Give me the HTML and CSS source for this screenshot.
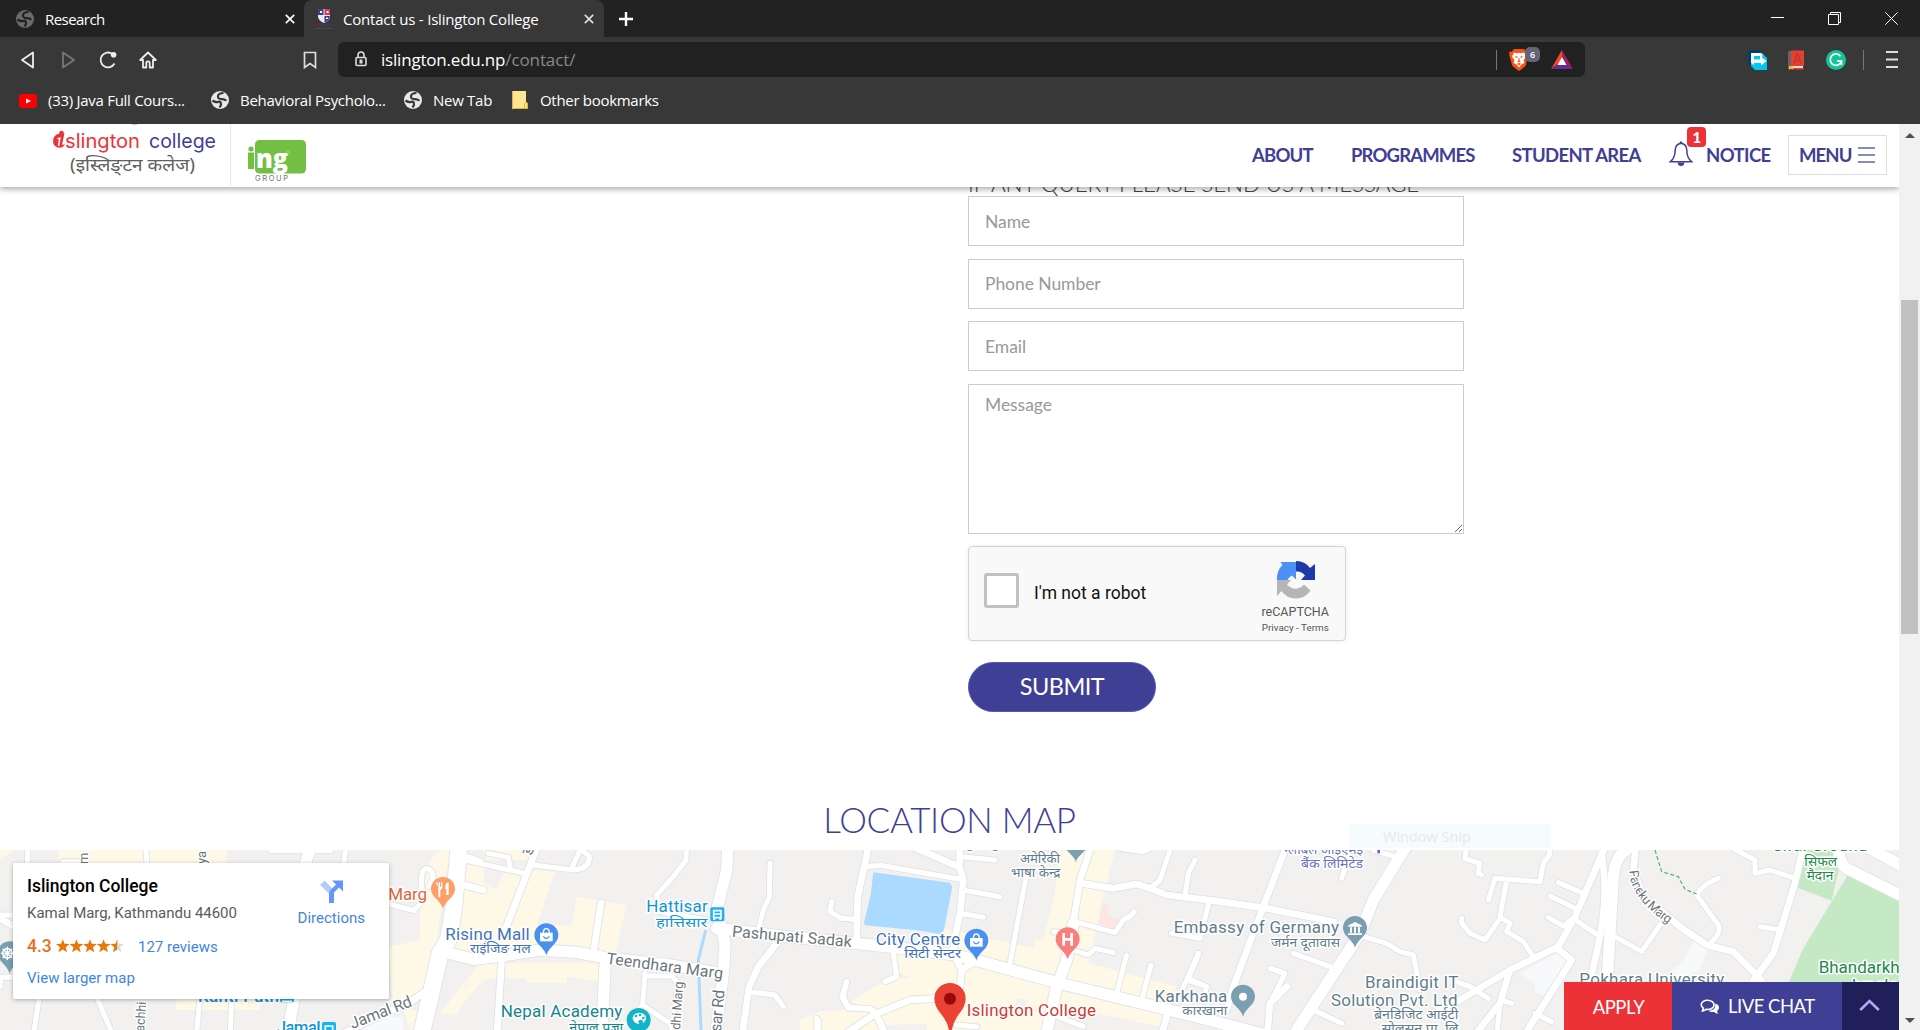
FILE: index.html
```html
<!DOCTYPE html>
<html lang="en">
<head>
<meta charset="utf-8">
<title>Contact us - Islington College</title>
<link rel="stylesheet" href="styles.css">
</head>
<body>
<div class="window">
  <div class="tabstrip">
    <div class="tab">
      <svg class="globe dim" viewBox="0 0 18 18"><circle cx="9" cy="9" r="9"/><path d="M1.500 9.500Q5 12 7.500 10.800T10 14L8.500 16.500M12.500 2Q7.500 2 7 5t3.500 3.200T15 10"/></svg>
      <span class="tab-title research">Research</span>
      <svg class="close" viewBox="0 0 10 10"><path d="M.8.8l8.400 8.400M9.200.8L.8 9.200"/></svg>
    </div>
    <div class="tab active">
      <svg class="crest" viewBox="0 0 20 20"><path fill="#e8e8ee" d="M4 0h12v8q-1 4-6 6-5-2-6-6z"/><path fill="#3c3f8f" d="M4 0h5.500v6H4zM10.500 7H16q-1 5-5.500 6.500z"/><path fill="#d8384a" d="M10.500 0H16v6h-5.500z"/><path fill="#fff" d="M6 2h2v2H6zM12.500 2h2v2h-2zM12 8.500h2v1.500h-2z"/><path stroke="#8b1f27" stroke-dasharray="1.500 .4" d="M0 16h9"/><path stroke="#3c3f8f" stroke-dasharray="1.500 .4" d="M10 16h10"/><path stroke="#575757" stroke-dasharray="1 .5" d="M2 19.300h16"/></svg>
      <span class="tab-title contact">Contact us - Islington College</span>
      <svg class="close" viewBox="0 0 10 10"><path d="M.8.8l8.400 8.400M9.200.8L.8 9.200"/></svg>
    </div>
    <svg class="newtab" viewBox="0 0 14 14"><path d="M7 0v14M0 7h14"/></svg>
    <div class="controls">
      <svg width="13" height="13" viewBox="0 0 13 13"><path d="M0 5.500h13"/></svg>
      <svg width="13" height="13" viewBox="0 0 13 13"><path d="M.5 2.500h10v10H.5zM2.500 2.500v-2h10v10h-2"/></svg>
      <svg width="13" height="13" viewBox="0 0 13 13"><path d="M.3.3l12.400 12.400M12.700.3L.3 12.700"/></svg>
    </div>
  </div>

  <div class="toolbar">
    <div class="navicons">
      <svg viewBox="0 0 18 18"><path d="M14 1.500v15L3 9z"/></svg>
      <svg class="off" viewBox="0 0 18 18"><path d="M4 1.500v15L15 9z"/></svg>
      <svg viewBox="0 0 18 18"><path d="M15.500 12.500A7.400 7.400 0 1 1 13.500 3"/><circle class="solid" cx="14.600" cy="3.800" r="2.800"/></svg>
      <svg viewBox="0 0 18 18"><path d="M1.200 9L9 1.500 16.800 9H14v7.500h-3.300V12q0-1.700-1.700-1.700T7.300 12v4.500H4V9z"/></svg>
    </div>
    <svg class="ribbon" viewBox="0 0 14 18"><path d="M1.500 1.500h11v15L7 12.500l-5.500 4z"/></svg>
    <div class="urlbar">
      <svg class="lock" viewBox="0 0 12 16"><rect x="1" y="6.500" width="10" height="8" rx="1"/><path d="M3 6.500V4q0-3 3-3t3 3v2.500"/><path d="M5.300 9.300h1.400v2.400H5.300z"/></svg>
      <span class="url">islington.edu.np<i>/contact/</i></span>
      <span class="url-sep"></span>
      <span class="brave">
        <svg viewBox="0 0 20 22"><path fill="#fb5012" d="M5 0h10l2.500 2.500 2 .5-1 4L17 16q-1 2-7 6-6-4-7-6L.5 7l-.5-4 3-.5z"/><path fill="#fff" d="M5 3.500l3 .8 2-.5 2 .5 3-.8 2 4-2.500 4 1 2.500-2.500 1-3 3.500-3-3.500-2.500-1 1-2.500-2.500-4z"/><path fill="#fb5012" d="M5.500 6.800l3.300 1-.8 1.500zM14.500 6.800l-3.300 1 .8 1.500zM9.600 8.500h.8l.2 3 1.200 1-1.800.8-1.800-.8 1.200-1zM7.800 14.800l2.200-.8 2.200.8-2.200 1.400z"/></svg>
        <b>6</b>
      </span>
      <svg class="bat" viewBox="0 0 22 19"><path fill="#ff4724" d="M11 0v7L7.500 13.500 0 19z"/><path fill="#9e1f63" d="M11 0l11 19-7.500-5.500L11 7z"/><path fill="#662d91" d="M0 19l7-5.500h8L22 19z"/><path fill="#fff" d="M11 7l4.500 8h-9z"/></svg>
    </div>
    <div class="extensions">
      <svg viewBox="0 0 20 20"><path fill="#043d6b" d="M0 0h11l4 4v13H4L0 13z"/><path fill="#00c8ee" d="M7 3h7l5 5v12H7l-4-4v-4z"/><path fill="#fff" d="M3 3h10l1.500 2-.5 2.500L18.500 11 13 15.500V13H6v2L3 13z"/><path fill="#00c8ee" d="M6 6h6v3.500H6z"/></svg>
      <svg viewBox="0 0 20 20"><path fill="#e63e33" d="M4 .5h13V16H4z"/><path fill="#656565" d="M1 1.500L4 .5V19H1z"/><path fill="#ddd" d="M4 16h12v2.500H4z"/><path fill="#b5261e" d="M4 18.500h13V20H4z"/><path fill="#f4c430" d="M2 16h4v3.500l-2-1-2 1.500z"/><path stroke="#c0352c" fill="none" stroke-width="1.400" d="M7 13.500l3-9.500h1l3 9.500M8 10.500h5"/></svg>
      <svg viewBox="0 0 20 20"><circle cx="10" cy="10" r="10" fill="#15c39a"/><path fill="none" stroke="#fff" stroke-width="1.700" d="M14.500 6.200A5.700 5.700 0 1 0 15.500 11H11M15.500 10.500V15"/></svg>
    </div>
    <span class="ext-sep"></span>
    <svg class="burger" viewBox="0 0 12 17"><path d="M0 1h12M0 8.500h12M0 16h12"/></svg>
  </div>

  <div class="bookmarks">
    <svg class="youtube" viewBox="0 0 18 14"><rect width="18" height="14" rx="3" fill="#f00"/><path fill="#fff" d="M7 4.500v5L12 7z"/></svg>
    <span class="bm java">(33) Java Full Cours...</span>
    <svg class="globe" viewBox="0 0 18 18"><circle cx="9" cy="9" r="9"/><path d="M1.500 9.500Q5 12 7.500 10.800T10 14L8.500 16.500M12.500 2Q7.500 2 7 5t3.500 3.200T15 10"/></svg>
    <span class="bm behav">Behavioral Psycholo...</span>
    <svg class="globe" viewBox="0 0 18 18"><circle cx="9" cy="9" r="9"/><path d="M1.500 9.500Q5 12 7.500 10.800T10 14L8.500 16.500M12.500 2Q7.500 2 7 5t3.500 3.200T15 10"/></svg>
    <span class="bm newt">New Tab</span>
    <svg class="folder" viewBox="0 0 16 18"><path fill="#fee594" d="M0 0h14v11l1.500 1v6H0z"/><path fill="none" stroke="#d9b545" d="M.5 17.500h15V12l-1.500-.5-1.500 1v5M.5 0v17"/></svg>
    <span class="bm other">Other bookmarks</span>
  </div>

  <div class="viewport">
    <div class="page">
      <header class="site-header">
        <svg class="logo" width="189" height="63" viewBox="0 124 189 63" overflow="visible">
          <path fill="#c5c4e2" d="M131 124h7l-1.500 1h-4z"/>
          <circle cx="61.500" cy="133" r="2.300" fill="#ed3237"/>
          <path fill="#ed3237" d="M53 141q0-6 6.500-7.500l5-.2-2.500 11.500q2 .3 3-1.500-1 4.500-6 4.500-6-1-6-6.800z"/><path fill="#fff" d="M56.500 138.500l4.300-1.500-1.500 9h-1.500l1-6.500z"/>
          <text class="logo-en red" x="65" y="147.500" textLength="75" lengthAdjust="spacingAndGlyphs">slington</text>
          <text class="logo-en blue" x="149" y="147.500" textLength="67" lengthAdjust="spacingAndGlyphs">college</text>
          <text class="logo-np" x="70" y="171" textLength="125" lengthAdjust="spacingAndGlyphs">(इस्लिङ्टन कलेज)</text>
        </svg>
        <span class="logo-sep"></span>
        <svg class="ing" width="60" height="44" viewBox="248 140 60 44">
          <rect x="255" y="140" width="51" height="33.500" rx="4.500" fill="#72bf44"/>
          <circle cx="251" cy="149" r="2.600" fill="#72bf44"/><path fill="#72bf44" d="M248 152.500h6V169h-6z"/>
          <text class="ing-text" x="256" y="168" textLength="32" lengthAdjust="spacingAndGlyphs">ng</text>
          <circle cx="288" cy="152.500" r="1.800" fill="none" stroke="#b8dfa0" stroke-width=".6"/>
          <text class="ing-group" x="255" y="181" textLength="33">GROUP</text>
        </svg>
        <nav class="site-nav">
          <a class="n1">ABOUT</a>
          <a class="n2">PROGRAMMES</a>
          <a class="n3">STUDENT AREA</a>
          <a class="notice">
            <svg class="bell" viewBox="0 0 24 26"><path d="M12 2.200Q6.500 3 6.200 9q0 8-5 11.800h21.600Q17.800 17 17.800 9 17.500 3 12 2.200z"/><path class="solid" d="M10.800 2.500V.6h2.400v1.900zM8.500 21.500h7q-.5 3.500-3.500 3.500t-3.500-3.500z"/></svg>
            <b class="badge">1</b>
            <span>NOTICE</span>
          </a>
          <a class="menu">MENU <i></i></a>
        </nav>
      </header>

      <main>
        <form class="contact-form">
          <h3>IF ANY QUERY PLEASE SEND US A MESSAGE</h3>
          <input type="text" placeholder="Name">
          <input type="text" placeholder="Phone Number">
          <input type="text" placeholder="Email">
          <textarea placeholder="Message"></textarea>
          <div class="captcha">
            <span class="check"></span>
            <span class="robot">I'm not a robot</span>
            <div class="captcha-brand">
              <svg viewBox="0 0 38 38"><path fill="#4a90f5" d="M0 19A19 19 0 0 1 5.500 4L3.500 1H19v17.500l-4-4Q11.500 16 10.500 19z"/><path fill="#1c3aa9" d="M19 0q9 0 14 7l5-4v16H24l4-4.500Q24.500 10 19 10.500z"/><path fill="#b5b5b5" d="M0 19h14l-4 4.500q4.500 5 10.500 4 4.500-1 6.500-4l6.500 6Q28 37.500 19 37.500 9.500 37.500 4.500 30L0 35z"/></svg>
              <b>reCAPTCHA</b>
              <small>Privacy - Terms</small>
            </div>
          </div>
          <button type="button" class="submit">SUBMIT</button>
        </form>

        <h2>LOCATION MAP</h2>
        <section class="map">
          <svg class="tiles" viewBox="0 0 5697 540">
            <defs>
              <g id="roads">
                <g transform="translate(0 -30)">
                  <path class="s" d="M85 0L80 120M435 0L445 120M1040 0L1028 100M118 470L98 600M285 460L345 600M600 470L588 600M695 470L690 600M0 440L5 412 60 412M1160 190L1242 212 1262 190 1265 110Q1270 75 1290 90T1285 140M0 225H60M180 75L190 65H240L260 75"/>
                  <path class="m" d="M815 30H990M0 235L60 270M1370 130L1450 150M1395 50L1440 65"/>
                  <path class="l" d="M930 30L905 100M885 460L860 600"/>
                  <path class="m" d="M1310 430L1240 480 1040 575"/>
                </g>
                <g transform="translate(1290 -30)">
                  <path class="xl" d="M88 0L72 200 55 300 30 340 10 430 -30 600"/>
                  <path class="l" d="M40 335L130 358 220 347 330 330 440 337 540 355 720 375 870 400M895 0L890 90 860 210 885 310 880 400 855 600"/>
                  <path class="l" d="M860 265L1070 290 1280 310 1440 328 1580 345 1890 430 2300 530 2600 610"/>
                  <path class="s" d="M110 62L285 100M310 75L430 90Q480 85 478 50L445 20M425 85L450 30M175 40L235 52 240 80M645 400L638 495 720 550M640 495L600 530M650 408H725L745 430 720 600M770 0L768 60 730 110 680 165 690 215 830 240M1020 70L1018 170 1000 210 985 270M1305 80L1350 76 1590 118M1205 185L1200 215 1235 235 1275 238M955 455L1035 465 1060 500M1250 425L1240 470 1255 500 1330 510 1370 600M1165 540V600M1390 335L1400 410 1365 425"/>
                  <path class="m" d="M330 0L225 270M513 190L490 340M215 360L200 600M1320 0L1283 170 1280 300M1040 310L985 380 957 440 935 600M1520 475L1440 480 1330 525 1220 600"/>
                  <path class="l" d="M525 375L515 600"/>
                </g>
                <g transform="translate(2400 -210)">
                  <path class="s" d="M485 230L585 240M490 330L600 350M480 400L550 412M680 280L630 550M1120 180L1080 300 1050 325M1185 240L1165 280 1155 350M825 425L945 458 970 420 995 405 1003 395M760 455L800 460M820 510L865 525 885 505 940 518M980 525L950 640M1053 555L1025 660M280 520L290 590 255 605M140 605L125 650 145 685 210 685 240 720 265 780M50 715V780M470 735L530 740M750 700L850 740M1225 375L1200 475 1115 460M1195 520L1160 600 1220 620M1160 600L1140 640M1415 565L1450 580M960 205L1030 215 1050 205"/>
                  <path class="m" d="M350 205L475 260M480 180L478 260 490 300 480 400 465 470 460 520 485 570 480 620M485 570L530 540M845 310L940 325 1010 312 1050 325 1100 345 1240 362 1400 385 1600 425M1100 710L1080 780M1460 620L1410 670 1400 780M880 180L840 300 820 430"/>
                  <path class="l" d="M820 430L800 540 770 620 735 780"/>
                </g>
                <g transform="translate(3480 -120)">
                  <path class="m" d="M390 80L310 290 220 530 200 600M1340 100L1245 320 1195 410 1050 480 900 570 800 620M1190 415L1235 450 1090 680M1050 480L1020 580 940 680M1325 130Q1345 250 1320 380L1285 540"/>
                  <path class="l" d="M750 90L640 270 600 370 410 660M1400 120Q1360 140 1358 230L1340 540"/>
                  <path class="s" d="M640 120L720 145M545 205L560 160M610 380L680 400 720 425 760 435 780 540M400 430L525 475M330 475L375 490 330 580 320 680M115 435L85 505 140 530 130 570M460 600L545 640M920 110L915 145 958 160 955 190 965 195M985 270L1005 205 1140 215 1150 160 1168 135V100M1040 210L1020 320 1050 340 1040 365 1090 395 1120 440M905 325V340L930 370 975 390 1020 325M1195 218L1270 250M1170 258L1245 295M1165 322L1210 348 1240 325 1320 380M1020 580L1010 680M890 515L930 530 985 565M1020 570L1055 580M1125 610L1175 635"/>
                </g>
                <g transform="translate(4500 -120)">
                  <path class="m" d="M410 90L400 180 430 260 540 350 620 405 700 425 775 500 820 560M915 90L885 220 820 430 740 540"/>
                  <path class="s" d="M655 205Q610 220 590 255L655 345Q665 370 630 400M345 380L425 425 480 345M690 110L765 150V190L810 180 885 205M780 350L845 360"/>
                  <path class="l" d="M1015 100Q1015 170 1050 180L1220 265M1100 110L1220 175"/>
                </g>
              </g>
            </defs>
            <g class="built">
              <path d="M0 0H40L0 30zM175 0H680V90H175zM540 400H780V480H525zM1320 0H1350L1310 270 1290 400 1180 480 1165 290 1260 270 1260 150 1290 30zM1210 480H1290L1260 540H1230zM1320 490L1410 400H1440L1360 495z"/>
              <path d="M1400 35L1455 50 1450 100 1490 120 1510 70 1580 80 1600 60 1665 65 1610 225 1715 225 1730 140 1880 165 1845 315 1640 300 1360 300zM1450 0H1600L1590 30H1460zM1440 340H1810L1800 395 1700 378V400H1580L1575 385H1465L1445 400 1395 405 1375 490 1320 490z"/>
              <path d="M2400 540V510L2460 485 2530 480Q2600 400 2730 380L2670 365 2690 305H2830V235L3100 295 3105 270 3130 265 3165 130 3175 0H3345L3305 160 3265 340 3530 410 3510 450 3480 530 3200 470 3150 540z"/>
            </g>
            <path class="gap" d="M3050 445L3085 448 3070 485 3045 470zM2650 525L2780 522V540H2650z"/>
            <path class="pink" d="M3305 165L3325 168 3322 195 3355 210 3340 238 3297 220z"/>
            <path class="lake" d="M2620 67L2850 98 2857 110 2832 240 2820 252 2745 240 2595 226 2592 218 2612 135z"/>
            <path class="stream" d="M2117 240L2095 330 2103 540M4824 240L4808 380"/>
            <path class="plain" d="M4670 310L4710 340 4630 435 4605 425V400L4560 370zM5080 275L5125 290 5100 360 5040 390 5015 360 5050 335zM1060 540L1140 500 1210 500V540z"/>
            <path class="park" d="M5545 72L5697 145V400H5365L5410 295zM5370 105L5405 0H5530L5495 152z"/>
            <use href="#roads" class="casing"/>
            <use href="#roads" class="surface"/>
            <path class="trail" d="M4965 0L4985 65 5035 80 5055 118 5090 132"/>

            <g class="pins">
              <path fill="#7b9eb0" d="M65 310a36 36 0 0 0-72 0q0 14 14 28 20 20 22 35 2-15 22-35 14-14 14-28z"/><circle cx="22" cy="310" r="14" fill="none" stroke="#fff" stroke-width="5"/><path stroke="#fff" stroke-width="4" d="M22 290v40M2 310h40M8 296l28 28M36 296L8 324"/>
              <g transform="translate(1329 117)"><path fill="#ff9e67" d="M36 0a36 36 0 0 0-72 0q0 14 14 28Q-2 48 0 60 2 48 22 28 36 14 36 0z"/><path fill="#fff" d="M-20-20h4v13h3v-13h4v13h3v-13h4v16q-1 6-6 7v22h-6V-7q-5-1-6-7zM17-20q-11 1-11 20h4v18h7z"/></g>
              <g transform="translate(1639 256)"><path fill="#4a90f0" d="M36 0a36 36 0 0 0-72 0q0 14 14 28Q-2 48 0 60 2 48 22 28 36 14 36 0z"/><path fill="#fff" d="M-19-8h38v26h-38z"/><path fill="none" stroke="#fff" stroke-width="4" d="M-9-6q0-14 9-14T9-6"/><path fill="none" stroke="#4a90f0" stroke-width="4" d="M-9 3q9 13 18 0"/></g>
              <g transform="translate(2929 272)"><path fill="#4a90f0" d="M36 0a36 36 0 0 0-72 0q0 14 14 28Q-2 48 0 60 2 48 22 28 36 14 36 0z"/><path fill="#fff" d="M-19-8h38v26h-38z"/><path fill="none" stroke="#fff" stroke-width="4" d="M-9-6q0-14 9-14T9-6"/><path fill="none" stroke="#4a90f0" stroke-width="4" d="M-9 3q9 13 18 0"/></g>
              <g transform="translate(3203 268)"><path fill="#f97e7e" d="M36 0a36 36 0 0 0-72 0q0 14 14 28Q-2 48 0 60 2 48 22 28 36 14 36 0z"/><path fill="none" stroke="#fff" stroke-width="8" d="M-12-19v38M12-19v38M-12 0h24"/></g>
              <g transform="translate(3729 440)"><path fill="#7b9eb0" d="M36 0a36 36 0 0 0-72 0q0 14 14 28Q-2 48 0 60 2 48 22 28 36 14 36 0z"/><circle r="12" fill="#fff"/></g>
              <path fill="#7b9eb0" d="M3200 0h56l-20 20q-8 8-8 18-2-10-9-18z"/>
              <g transform="translate(4065 234)"><path fill="#7b9eb0" d="M36 0a36 36 0 0 0-72 0q0 14 14 28Q-2 48 0 60 2 48 22 28 36 14 36 0z"/><path fill="#fff" d="M-20-8L0-18 20-8v4h-40zM-15-2h6v16h-6zM-3-2h6v16h-6zM9-2h6v16H9zM-21 16h42v5h-42z"/></g>
              <circle cx="1916" cy="510" r="36" fill="#12b5c8"/><ellipse cx="1918" cy="505" rx="20" ry="17" fill="#fff"/><g fill="#12b5c8"><circle cx="1908" cy="498" r="4"/><circle cx="1920" cy="495" r="4"/><circle cx="1930" cy="504" r="4"/><circle cx="1922" cy="516" r="7"/></g>
              <path fill="#ea4335" d="M2897 446a47 47 0 0 0-94 0q0 22 20 46 20 24 24 50h8q4-26 22-50 20-24 20-46z"/><circle cx="2850" cy="446" r="18" fill="#960a0a"/>
              <g fill="#1ab2f5"><rect x="2131" y="172" width="42" height="42" rx="5"/><rect x="840" y="415" width="42" height="42" rx="5"/><rect x="966" y="516" width="42" height="42" rx="5"/></g>
              <path fill="none" stroke="#fff" stroke-width="5" d="M2141 203v-21h22v21zM2141 192h22M846 454h30M976 545v-17h22v17"/><path fill="#fff" d="M2140 204h6v6h-6zM2158 204h6v6h-6z"/>
              <path stroke="#5c6bc0" stroke-width="8" d="M4136 0v10"/>
            </g>

            <g class="labels">
              <text class="road sm" transform="translate(263 42) rotate(-90)">m</text>
              <text class="road sm" transform="translate(617 42) rotate(-90)">ya</text>
              <text class="road sm" transform="translate(432 546) rotate(-86)" textLength="90">achhi</text>
              <text class="orange" x="1165" y="151" textLength="116">Marg</text>
              <text class="cyan b" x="594" y="455" textLength="243">Kanti Path</text>
              <text class="cyan b" x="830" y="548" textLength="132">Jamal</text>
              <text class="road" transform="translate(1057 537) rotate(-21)" textLength="195">Jamal Rd</text>
              <text class="blue" x="1336" y="269" textLength="253">Rising Mall</text>
              <text class="blue np" x="1410" y="310" textLength="182" lengthAdjust="spacingAndGlyphs">राइंजिङ मल</text>
              <text class="np road" transform="translate(1595 18) rotate(-70)">ड</text>
              <text class="cyan" x="1939" y="187" textLength="184">Hattisar</text>
              <text class="cyan np" x="1968" y="231" textLength="154" lengthAdjust="spacingAndGlyphs">हात्तिसार</text>
              <text class="road" transform="translate(1818 341) rotate(7.500)" textLength="352">Teendhara Marg</text>
              <text class="road" transform="translate(2195 260) rotate(5)" textLength="360">Pashupati Sadak</text>
              <text class="road sm" transform="translate(2040 540) rotate(-86)" textLength="145">dhi Marg</text>
              <text class="road" transform="translate(2163 546) rotate(-85)" textLength="126">sar Rd</text>
              <text class="teal" x="1502" y="501" textLength="365">Nepal Academy</text>
              <text class="teal np" x="1708" y="545" textLength="162" lengthAdjust="spacingAndGlyphs">नेपाल प्रज्ञा</text>
              <text class="blue" x="2627" y="284" textLength="254">City Centre</text>
              <text class="blue np" x="2713" y="324" textLength="170" lengthAdjust="spacingAndGlyphs">सिटी सेन्टर</text>
              <text class="slate" x="2820" y="-6" textLength="246">Language C</text>
              <text class="slate np" x="3060" y="38" textLength="120" lengthAdjust="spacingAndGlyphs">अमेरिकी</text>
              <text class="slate np" x="3033" y="80" textLength="148" lengthAdjust="spacingAndGlyphs">भाषा केन्द्र</text>
              <text class="college" x="2900" y="498" textLength="388">Islington College</text>
              <text class="slate" x="3464" y="455" textLength="218">Karkhana</text>
              <text class="slate np" x="3547" y="496" textLength="135" lengthAdjust="spacingAndGlyphs">कारखाना</text>
              <text class="slate" x="3521" y="248" textLength="496">Embassy of Germany</text>
              <text class="slate np" x="3813" y="290" textLength="207" lengthAdjust="spacingAndGlyphs">जर्मन दूतावास</text>
              <text class="indigo np" x="3853" y="12" textLength="236" lengthAdjust="spacingAndGlyphs">ग्लोबल आइएमई</text>
              <text class="indigo np" x="3903" y="54" textLength="186" lengthAdjust="spacingAndGlyphs">बैंक लिमिटेड</text>
              <text class="slate" x="4095" y="415" textLength="280">Braindigit IT</text>
              <text class="slate" x="3993" y="467" textLength="380">Solution Pvt. Ltd</text>
              <text class="slate np" x="4122" y="508" textLength="253" lengthAdjust="spacingAndGlyphs">ब्रेनडिजिट आईटी</text>
              <text class="slate np" x="4145" y="550" textLength="230" lengthAdjust="spacingAndGlyphs">सोलुसन प्रा. लि</text>
              <text class="slate" x="4738" y="406" textLength="435">Pokhara University</text>
              <path id="paneku" fill="none" d="M4888 62Q4890 150 5020 232"/>
              <text class="road sm"><textPath href="#paneku" textLength="206">Paneku Marg</textPath></text>
              <text class="green" x="5317" y="4" textLength="285">Sifal Ground</text>
              <text class="green np" x="5413" y="48" textLength="98" lengthAdjust="spacingAndGlyphs">सिफल</text>
              <text class="green np" x="5420" y="90" textLength="80" lengthAdjust="spacingAndGlyphs">मैदान</text>
              <text class="green" x="5456" y="370" textLength="283">Bhandarkhal</text>
              <text class="green" x="5540" y="423">Jungle</text>
            </g>
          </svg>
          <div class="place-card">
            <div class="place-info">
              <strong>Islington College</strong>
              <address>Kamal Marg, Kathmandu 44600</address>
              <div class="rating">
                <b>4.3</b>
                <svg viewBox="0 0 70 14"><path fill="#ddd" d="M63 0l1.800 4.800 5.200.2-4 3.200 1.400 5.300L63 10.500z"/><path d="M7 0l1.800 4.800L14 5 10 8.200l1.400 5.300L7 10.500l-4.400 3L4 8.200 0 5l5.200-.2zM21 0l1.800 4.800L28 5l-4 3.200 1.400 5.300-4.400-3-4.400 3L18 8.200 14 5l5.200-.2zM35 0l1.800 4.800L42 5l-4 3.200 1.400 5.300-4.400-3-4.400 3L32 8.200 28 5l5.200-.2zM49 0l1.800 4.800L56 5l-4 3.200 1.400 5.300-4.400-3-4.400 3L46 8.200 42 5l5.200-.2zM63 0v10.500l-4.400 3L60 8.200 56 5l5.200-.2z"/></svg>
                <a>127 reviews</a>
              </div>
              <a class="larger">View larger map</a>
            </div>
            <div class="directions">
              <svg viewBox="0 0 23 23"><path fill="#b3cdfb" d="M0 5L4.500.5 13 9l-3 5.500z"/><path fill="#6396f6" d="M9 23V13.500q0-2 1.500-3.500L16 4.500 12 .5h11v11l-4-4-5 5V23z"/></svg>
              <a>Directions</a>
            </div>
          </div>
        </section>
      </main>

      <div class="snip">Window Snip</div>
      <div class="actions">
        <a class="apply">APPLY</a>
        <a class="chat"><svg viewBox="0 0 20 16"><path d="M7.500 1.200C4 1.200 1.200 3.200 1.200 5.800q0 2 2.200 3.400L2.500 12q2.500-.6 3.300-1.600 5.200.5 7.400-2.200 2-3.200-1-5.500-2-1.500-4.700-1.500z"/><path class="solid" d="M15 4.500q4 1 4 4.200 0 2-2 3.300.3 1.500 1.500 2.500-2.800.3-4.300-1.600-3.700.5-5.700-1.200 6.500-.2 6.800-5.500z"/></svg>LIVE CHAT</a>
        <a class="top"><svg viewBox="0 0 21 12"><path d="M1.200 11l9.300-9 9.300 9"/></svg></a>
      </div>
    </div>
    <div class="scrollbar"><i class="up"></i><span class="thumb"></span><i class="down"></i></div>
  </div>
</div>
</body>
</html>
```

FILE: styles.css
```css
* { box-sizing: border-box; }
body { margin: 0; background: #fff; }
svg { display: block; flex: none; }
.window { width: 1920px; height: 1030px; overflow: hidden; display: flex; flex-direction: column; font-family: "Open Sans", "Noto Sans", sans-serif; }

/* tab strip */
.tabstrip { height: 37px; background: #222; display: flex; align-items: flex-start; }
.tab { height: 37px; width: 304px; display: flex; align-items: center; padding: 0 9px 0 16px; color: #fff; font-size: 15px; }
.tab.active { width: 300px; background: #383838; border-radius: 8px 8px 0 0; padding: 0 10px 0 10px; }
.tab-title { flex: 1; white-space: nowrap; }
.research { margin-left: 11px; letter-spacing: -.55px; }
.contact { margin-left: 9px; letter-spacing: -.2px; }
.close { width: 10px; height: 10px; fill: none; stroke: #fff; stroke-width: 1.700; }
.tab.active .close { stroke: #ddd; }
.crest { width: 20px; height: 20px; fill: none; }
.globe { width: 18px; height: 18px; fill: #e8e8e8; }
.globe path { fill: none; stroke: #383838; stroke-width: 2.200; }
.globe.dim { fill: #6b6b6d; }
.globe.dim path { stroke: #222; }
.newtab { width: 14px; height: 14px; margin: 12px 0 0 15px; stroke: #fff; stroke-width: 2.400; }
.controls { margin-left: auto; display: flex; gap: 44px; padding: 12px 22px 0 0; }
.controls svg { fill: none; stroke: #fff; stroke-width: 1; }

/* toolbar */
.toolbar { height: 45px; background: #383838; display: flex; align-items: center; }
.navicons { display: flex; gap: 22px; padding-left: 19px; width: 303px; }
.navicons svg { width: 18px; height: 18px; fill: none; stroke: #eee; stroke-width: 1.800; stroke-linejoin: round; }
.navicons .off { stroke: #777; }
.navicons .solid { fill: #eee; stroke: none; }
.ribbon { width: 14px; height: 18px; fill: none; stroke: #ddd; stroke-width: 1.700; }
.urlbar { width: 1247px; height: 35px; margin-left: 21px; background: #212121; border-radius: 6px; display: flex; align-items: center; }
.lock { width: 12px; height: 16px; margin: -1px 0 0 17px; fill: none; stroke: #ddd; stroke-width: 1.600; }
.url { margin-left: 14px; flex: 1; color: #fff; font-size: 17px; letter-spacing: -.2px; }
.url i { font-style: normal; color: #8a8a8a; letter-spacing: -.1px; }
.url-sep { width: 1px; height: 20px; background: #777; }
.brave { position: relative; width: 42px; margin-left: 12px; }
.brave svg { width: 20px; height: 22px; }
.brave b { position: absolute; left: 16px; top: -2px; width: 15px; height: 15px; border-radius: 5px; background: #636477; color: #fff; font: 600 9px/15px "Open Sans", sans-serif; text-align: center; }
.bat { width: 22px; height: 19px; margin-right: 12px; }
.extensions { display: flex; gap: 19px; margin-left: 163px; }
.extensions svg { width: 20px; height: 20px; }
.ext-sep { width: 1px; height: 20px; background: #777; margin-left: 17px; }
.burger { width: 12px; height: 17px; margin-left: 22px; stroke: #ddd; stroke-width: 1.800; }

/* bookmarks */
.bookmarks { height: 42px; background: #383838; display: flex; align-items: center; padding: 0 0 7px 19px; color: #fff; font-size: 15px; white-space: nowrap; }
.bookmarks .youtube { width: 18px; height: 14px; margin-top: 2px; }
.bm { margin-left: 11px; letter-spacing: -.28px; }
.java { width: 163px; }
.behav { width: 164px; }
.newt { width: 79px; }
.other { margin-left: 12px; letter-spacing: -.3px; }
.folder { width: 16px; height: 18px; }

/* page area */
.viewport { height: 906px; display: flex; background: #fff; }
.page { position: relative; width: 1899px; overflow: hidden; font-family: Lato, sans-serif; }
.scrollbar { width: 21px; background: #f1f1f1; display: flex; flex-direction: column; align-items: center; padding: 9px 0 7px; }
.scrollbar i { border: 5px solid transparent; }
.scrollbar .up { border-top: 0; border-bottom-color: #505050; }
.scrollbar .down { border-bottom: 0; border-top-color: #505050; margin-top: auto; }
.thumb { width: 17px; height: 334px; margin-top: 162px; background: #c1c1c1; }

.site-header { position: relative; z-index: 2; height: 63px; background: #fff; box-shadow: 0 2px 6px rgba(0,0,0,.35); display: flex; }
.logo { width: 189px; height: 63px; overflow: visible; margin-right: 41px; }
.logo-en { font: 20px Inter, sans-serif; }
.red { fill: #ed3237; }
.blue { fill: #3f4095; }
.logo-np { font: 17.500px "Noto Sans", "Noto Sans Devanagari", sans-serif; fill: #606060; }
.logo-sep { width: 1px; height: 62px; background: #e8e8e8; }
.ing { margin: 16px 0 0 17px; }
.ing-text { font: 800 27px "Open Sans", sans-serif; fill: #fff; }
.ing-group { font: 7.500px Inter, sans-serif; fill: #777; }
.site-nav { margin-left: auto; width: 647px; display: grid; grid-template-columns: 99px 161px 157px 119px 99px; color: #3f4095; font-size: 18.500px; font-weight: 700; align-items: center; letter-spacing: -.6px; white-space: nowrap; padding-bottom: 2px; }
.n1 { letter-spacing: -.8px; }
.n2 { letter-spacing: -.85px; }
.n3 { letter-spacing: -.65px; }
.notice { position: relative; display: flex; align-items: center; gap: 13px; }
.bell { width: 24px; height: 26px; margin-top: -2px; fill: none; stroke: #3f4095; stroke-width: 1.500; }
.bell .solid { fill: #3f4095; stroke: none; }
.badge { position: absolute; left: 18px; top: -16px; width: 19px; height: 20px; border-radius: 4px; background: #ed3237; color: #fff; font: 900 15px/20px Lato, sans-serif; text-align: center; }
.menu { height: 40px; border: 1px solid #ddd; display: flex; align-items: center; justify-content: space-between; padding: 0 11px 0 10px; letter-spacing: -.9px; }
.menu i { width: 17px; height: 16px; border: solid #8689c3; border-width: 2px 0; background: linear-gradient(#8689c3, #8689c3) 0 5px / 17px 2px no-repeat; }

/* form */
.contact-form { width: 496px; margin-left: 968px; height: 525px; display: flex; flex-direction: column; align-items: flex-start; }
.contact-form h3 { margin: -16px 0 0; height: 25px; font: 300 22.500px/26px Lato, sans-serif; color: #444; letter-spacing: -.15px; white-space: nowrap; }
.contact-form input, .contact-form textarea { width: 496px; height: 50px; border: 1px solid #ccc; border-radius: 0; padding: 0 16px; margin: 0 0 13px; font: 17.500px Lato, sans-serif; letter-spacing: -.06px; background: #fff; outline: 0; }
.contact-form input:nth-of-type(2) { margin-bottom: 12px; padding-bottom: 2px; }
.contact-form ::placeholder { color: #999; opacity: 1; }
.contact-form textarea { height: 150px; padding: 9px 16px; margin-bottom: 12px; resize: vertical; }
.captcha { width: 378px; height: 95px; border: 1px solid #d3d3d3; border-radius: 4px; background: #f9f9f9; box-shadow: 0 0 4px rgba(0,0,0,.08); display: flex; font-family: Roboto, sans-serif; }
.check { width: 35px; height: 35px; margin: 26px 0 0 15px; border: 3px solid #c1c1c1; border-radius: 3px; background: #fff; }
.robot { margin: 35px 0 0 15px; font-size: 17.500px; line-height: 22px; color: #111; }
.captcha-brand { margin: 14px 16px 0 auto; display: flex; flex-direction: column; align-items: center; color: #555; }
.captcha-brand svg { width: 38px; height: 38px; margin-left: 2px; }
.captcha-brand b { font-weight: 400; font-size: 12.500px; line-height: 16px; margin-top: 5px; }
.captcha-brand small { font-size: 9.900px; line-height: 15px; }
.submit { width: 188px; height: 50px; margin-top: 21px; padding: 0 0 2px; border: 1px solid #5657bd; border-radius: 25px; background: #3f4095; color: #fff; font: 23.500px Lato, sans-serif; letter-spacing: -.5px; }
h2 { margin: 0; height: 138px; padding-top: 85px; text-align: center; color: #3f4095; font: 300 35px/44px Lato, sans-serif; letter-spacing: -.3px; }

/* map */
.map { position: relative; width: 1899px; height: 180px; background: #f2f1f0; font-family: Roboto, sans-serif; }
.tiles { width: 1899px; height: 180px; }
.built { fill: #fef8e6; }
.gap { fill: #f2f1f0; }
.pink { fill: #fde5e4; }
.lake { fill: #aadaff; }
.stream { fill: none; stroke: #aadaff; stroke-width: 9; }
.plain { fill: #f8f9fb; }
.park { fill: #c5e8c5; }
.trail { fill: none; stroke: #5bb974; stroke-width: 4; stroke-dasharray: 12 7; }
.casing, .surface { fill: none; stroke-linecap: round; stroke-linejoin: round; }
.casing { stroke: #dfe1e7; --edge: 5px; }
.surface { stroke: #fff; --edge: 0px; }
.s { stroke-width: calc(15px + var(--edge)); }
.m { stroke-width: calc(20px + var(--edge)); }
.l { stroke-width: calc(34px + var(--edge)); }
.xl { stroke-width: calc(50px + var(--edge)); }
.labels text { font-family: Roboto, "Noto Sans", "Noto Sans Devanagari", sans-serif; font-size: 51px; font-weight: 400; paint-order: stroke; stroke: #fff; stroke-width: 9px; stroke-linejoin: round; }
.labels .np { font-size: 40px; }
.labels .sm { font-size: 39px; }
.labels .b { font-weight: 500; }
.labels .road { fill: #6c757b; }
.labels .road:not(.sm) { font-size: 48px; }
.labels .blue { fill: #4373b8; }
.labels .cyan { fill: #0f95d4; }
.labels .teal { fill: #12858d; }
.labels .slate { fill: #5f7d8c; }
.labels .indigo { fill: #6c73bd; }
.labels .green { fill: #23884a; }
.labels .orange { fill: #d9683c; }
.labels .college { fill: #cf3a32; }

.place-card { position: absolute; left: 13px; top: 13px; width: 376px; height: 136px; background: #fff; border-radius: 2px; box-shadow: 0 1px 4px rgba(0,0,0,.3); display: flex; justify-content: space-between; padding: 0 24px 0 14px; color: #4285e0; font-size: 15px; }
.place-card strong { display: block; margin-top: 13px; font-weight: 500; font-size: 17.500px; line-height: 21px; color: #000; letter-spacing: -.02px; }
.place-card address { font-style: normal; color: #5b5b5b; margin-top: 7px; line-height: 18px; letter-spacing: -.02px; }
.rating { display: flex; align-items: center; margin-top: 13px; height: 22px; }
.rating b { font-weight: 500; font-size: 17.500px; color: #e7711b; width: 29px; }
.rating svg { width: 68px; height: 14px; fill: #e7780a; }
.rating a { margin-left: 14px; margin-top: 2px; }
.larger { display: block; margin-top: 12px; line-height: 18px; }
.directions { display: flex; flex-direction: column; align-items: center; }
.directions svg { width: 23px; height: 23px; margin-top: 17px; }
.directions a { margin-top: 6px; line-height: 18px; }

.snip { position: absolute; left: 1349px; top: 700px; width: 202px; height: 24px; padding-left: 34px; background: #f6fbfe; color: #e9e9e9; font: 14.500px/25px "Open Sans", sans-serif; }
.actions { position: absolute; right: 0; bottom: 0; height: 48px; display: flex; color: #fff; font-size: 18.500px; line-height: 50px; letter-spacing: -.5px; }
.apply { width: 108px; padding-left: 1px; background: #ed3237; text-align: center; }
.chat { width: 170px; background: #3f4095; display: flex; align-items: center; padding-left: 28px; }
.chat svg { width: 20px; height: 16px; margin: 1px 8px 0 0; fill: none; stroke: #fff; stroke-width: 1.600; }
.chat .solid { fill: #fff; stroke: none; }
.top { width: 57px; background: #211f5a; display: flex; justify-content: center; padding-right: 2px; }
.top svg { width: 21px; height: 12px; margin-top: 17px; fill: none; stroke: #a9a9f5; stroke-width: 2.600; }
```
